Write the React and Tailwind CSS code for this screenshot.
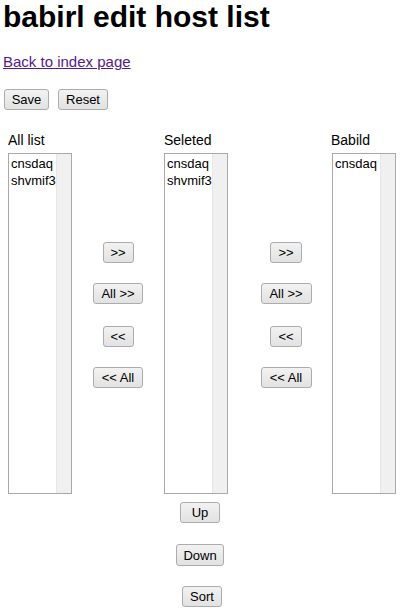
import React from "react";

const btn =
  "h-[21px] border border-[#acacac] rounded-[3px] bg-gradient-to-b from-[#f2f2f2] to-[#e2e2e2] text-[13px] leading-[19px] text-black flex items-center justify-center";

function Btn({ w, children }) {
  return (
    <button className={btn} style={{ width: w }}>
      {children}
    </button>
  );
}

function ListBox({ items }) {
  return (
    <div className="w-[64px] h-[341px] border border-[#a9a9a9] bg-white flex">
      <div className="flex-1 pl-[2px] pt-[1px] text-[13px] leading-[17px] text-black overflow-hidden">
        {items.map((it) => (
          <div key={it}>{it}</div>
        ))}
      </div>
      <div className="w-[15px] bg-[#f0f0f0] border-l border-[#e6e6e6]" />
    </div>
  );
}

function MoveButtons({ small, wide }) {
  return (
    <div className="flex flex-col items-center pt-[89px]">
      <Btn w={small}>&gt;&gt;</Btn>
      <div className="h-[20px]" />
      <Btn w={wide}>All &gt;&gt;</Btn>
      <div className="h-[22px]" />
      <Btn w={small}>&lt;&lt;</Btn>
      <div className="h-[20px]" />
      <Btn w={wide}>&lt;&lt; All</Btn>
    </div>
  );
}

export default function App() {
  return (
    <div
      className="w-[418px] h-[614px] bg-white text-black overflow-hidden"
      style={{ fontFamily: '"Liberation Sans", Arial, sans-serif' }}
    >
      <h1 className="pl-[3px] text-[30px] leading-[34px] font-bold">
        babirl edit host list
      </h1>
      <div className="mt-[19px] pl-[3px] h-[18px] text-[15px] leading-[18px]">
        <a href="#" className="underline text-[#551a8b]">
          Back to index page
        </a>
      </div>
      <div className="mt-[18px] pl-[4px] flex gap-[9px]">
        <Btn w={45}>Save</Btn>
        <Btn w={50}>Reset</Btn>
      </div>

      <div className="mt-[22px] flex text-[14px] leading-[16px]">
        <div className="ml-[8px] w-[64px]">All list</div>
        <div className="w-[92px]" />
        <div className="w-[64px]">Seleted</div>
        <div className="w-[104px]" />
        <div className="w-[64px] -ml-[1px]">Babild</div>
      </div>

      <div className="mt-[5px] flex">
        <div className="ml-[8px]">
          <ListBox items={["cnsdaq", "shvmif3"]} />
        </div>
        <div className="w-[92px]">
          <MoveButtons small={31} wide={50} />
        </div>
        <div>
          <ListBox items={["cnsdaq", "shvmif3"]} />
        </div>
        <div className="w-[104px] pl-[12px]">
          <MoveButtons small={32} wide={51} />
        </div>
        <div>
          <ListBox items={["cnsdaq"]} />
        </div>
      </div>

      <div className="mt-[8px] ml-[160px] w-[80px] flex flex-col items-center">
        <Btn w={40}>Up</Btn>
        <div className="h-[21px]" />
        <div className="h-[22px] flex">
          <button className={btn + " h-[22px]"} style={{ width: 48 }}>
            Down
          </button>
        </div>
        <div className="h-[20px]" />
        <div className="pl-[4px]">
          <Btn w={40}>Sort</Btn>
        </div>
      </div>
    </div>
  );
}
